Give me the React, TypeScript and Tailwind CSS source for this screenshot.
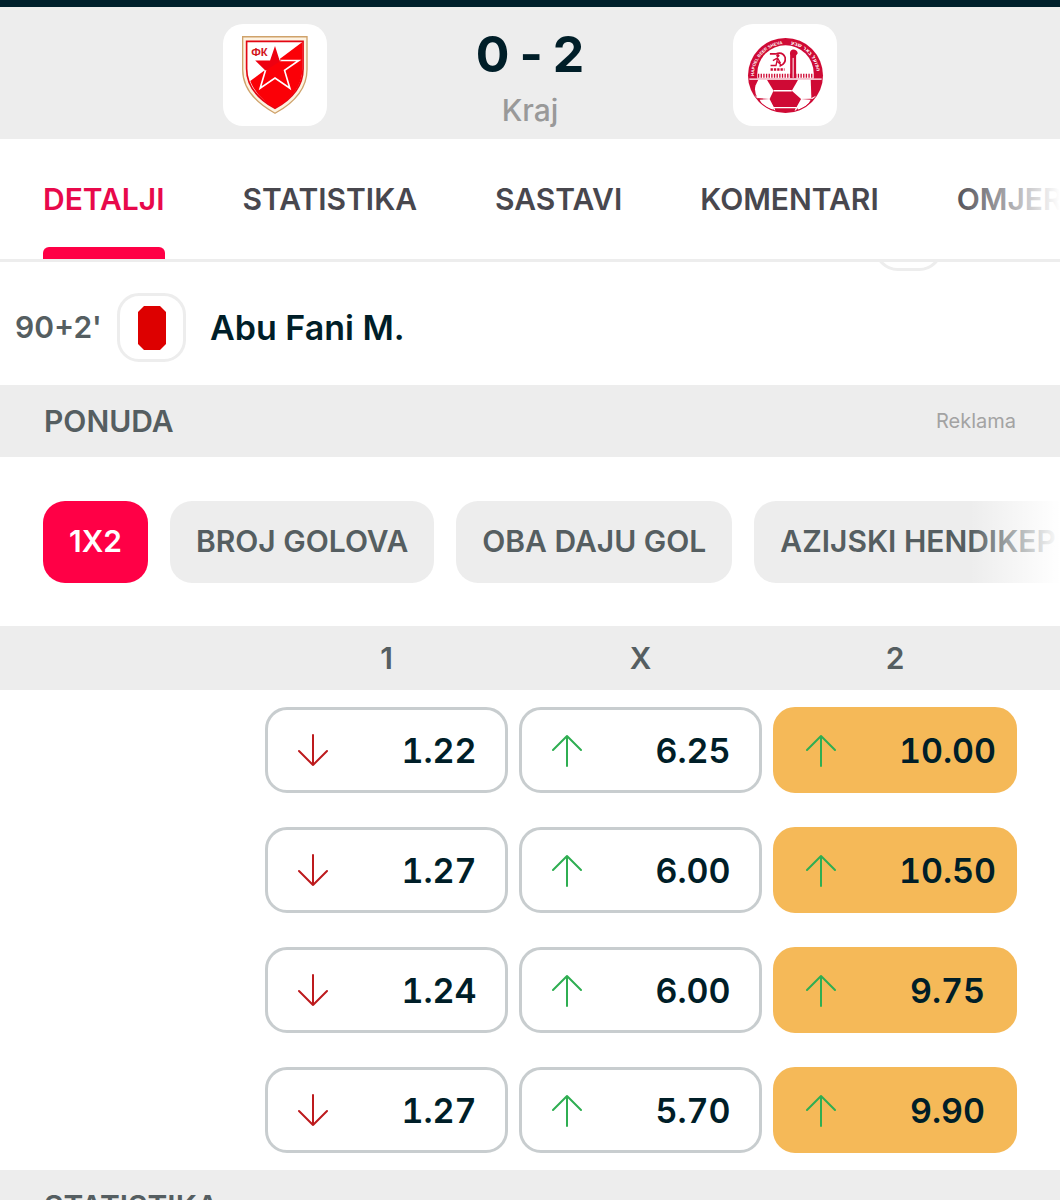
import { clsx } from 'clsx';

type Trend = 'up' | 'down';
type Odd = { value: string; trend: Trend; best?: boolean };

const tabs = ['DETALJI', 'STATISTIKA', 'SASTAVI', 'KOMENTARI', 'OMJERI'];
const markets = ['1X2', 'BROJ GOLOVA', 'OBA DAJU GOL', 'AZIJSKI HENDIKEP'];

const rows: Odd[][] = [
  [{ value: '1.22', trend: 'down' }, { value: '6.25', trend: 'up' }, { value: '10.00', trend: 'up', best: true }],
  [{ value: '1.27', trend: 'down' }, { value: '6.00', trend: 'up' }, { value: '10.50', trend: 'up', best: true }],
  [{ value: '1.24', trend: 'down' }, { value: '6.00', trend: 'up' }, { value: '9.75', trend: 'up', best: true }],
  [{ value: '1.27', trend: 'down' }, { value: '5.70', trend: 'up' }, { value: '9.90', trend: 'up', best: true }],
];

function ZvezdaCrest() {
  return (
    <svg viewBox="96 104 200 236" className="h-[78px] w-[66px]" role="img" aria-label="Crvena zvezda">
      <path d="M98 106H293V205C293 262 252 307 196 338C140 307 98 262 98 205Z" fill="#fdf3e2" stroke="#cfa26a" strokeWidth="4" />
      <path d="M110 120H281V203C281 255 245 296 196 323C147 296 110 255 110 203Z" fill="#fff" stroke="#e30613" strokeWidth="5" />
      <path d="M279 122V203C279 255 245 296 196 322C160 302 134 274 121 240Z" fill="#fb0007" />
      <path d="M196 138L210 178H268L225 208L241 262L196 231L151 262L167 208L138 180L182 178Z" fill="#fb0007" stroke="#fff" strokeWidth="5" />
      <path d="M196 134L210 178H216L167 208L136 178H181Z" fill="#ee0010" />
      <text x="149" y="164" textAnchor="middle" fontSize="34" className="fill-[#d3151b] font-['Liberation_Sans'] font-bold">ФК</text>
    </svg>
  );
}

function HapoelCrest() {
  return (
    <svg viewBox="80 77 232 232" className="h-[77px] w-[77px]" role="img" aria-label="Hapoel Beer Sheva">
      <defs>
        <clipPath id="ball"><circle cx="196" cy="193" r="110" /></clipPath>
        <path id="ring-left" d="M101 196A95 95 0 0 1 196 98" />
        <path id="ring-right" d="M206 98A95 95 0 0 1 291 196" />
      </defs>
      <circle cx="196" cy="193" r="113" fill="#cf0a35" />
      <path d="M111 187A85 85 0 0 1 281 187V202H111Z" fill="#fff" />
      <text fontSize="13" className="fill-white font-['Liberation_Sans'] font-bold">
        <textPath href="#ring-left" startOffset="2">HAPOEL BEER SHEVA</textPath>
      </text>
      <text fontSize="16" className="fill-white font-['DejaVu_Sans'] font-bold">
        <textPath href="#ring-right" startOffset="6">הפועל באר שבע</textPath>
      </text>
      <path d="M113 194H279" stroke="#cf0a35" strokeWidth="12" strokeDasharray="4 4" />
      <path d="M210 201V132Q207 119 218 115Q230 114 233 126L228 133V201Z" fill="#cf0a35" />
      <path d="M219 140V200" stroke="#fff" strokeWidth="3" />
      <path d="M149 128H166Q188 120 195 139Q198 158 178 165M151 163H167" fill="none" stroke="#cf0a35" strokeWidth="5" />
      <circle cx="173" cy="133" r="5" fill="#cf0a35" />
      <path d="M158 148L172 140L181 156M172 141L167 165M172 151L184 163" fill="none" stroke="#cf0a35" strokeWidth="4" />
      <path d="M151 175H193" stroke="#cf0a35" strokeWidth="8" strokeDasharray="7 3" />
      <g clipPath="url(#ball)">
        <path d="M82 204H310" stroke="#fff" strokeWidth="4" />
        <path d="M106 222L114 206H140L160 239L148 264L112 261Q100 240 106 222Z" fill="#fff" />
        <path d="M234 206H272L274 263L243 264L215 239Z" fill="#fff" />
        <path d="M160 239H215M148 264L160 289L166 308M243 264L230 289L222 308M274 263L296 252M112 261L96 250" fill="none" stroke="#fff" strokeWidth="4" />
        <path d="M118 266Q126 286 158 296L162 289L148 264Z" fill="#fff" />
        <path d="M272 266Q264 286 234 296L230 289L243 264Z" fill="#fff" />
        <path d="M148 264H243L228 290H162Z" fill="#cf0a35" />
        <path d="M160 290H230" stroke="#fff" strokeWidth="4" />
      </g>
    </svg>
  );
}

function TrendArrow({ trend }: { trend: Trend }) {
  return (
    <svg viewBox="0 0 30 34" className="h-[34px] w-[30px] shrink-0" fill="none" strokeWidth="2" strokeLinecap="round" strokeLinejoin="round" aria-hidden="true">
      {trend === 'up'
        ? <path d="M15 33V3M1 17L15 3L29 17" stroke="#2fae52" />
        : <path d="M15 2V32M1 18L15 32L29 18" stroke="#bd1a1d" />}
    </svg>
  );
}

function SectionBar({ title, note }: { title: string; note?: string }) {
  return (
    <div className="flex h-[72px] items-center justify-between bg-[#ededed] px-11">
      <h2 className="text-[30px] font-semibold text-[#555e61]">{title}</h2>
      {note && <span className="text-[20px] text-[#a3a3a3]">{note}</span>}
    </div>
  );
}

export default function App() {
  return (
    <div className="h-screen overflow-hidden bg-white font-['Inter',sans-serif] text-[#001e28]">
      <header className="border-t-[7px] border-[#00202b] bg-[#ededed]">
        <div className="flex h-[132px] justify-center pt-[17px]">
          <div className="flex h-[102px] w-[104px] items-center justify-center rounded-[20px] bg-white"><ZvezdaCrest /></div>
          <div className="w-[406px] text-center">
            <div className="flex h-[60px] items-center justify-center gap-[10px] text-[50px] font-bold">
              <span>0</span>
              <span>-</span>
              <span>2</span>
            </div>
            <p className="text-[30px] leading-[52px] font-medium text-[#999]">Kraj</p>
          </div>
          <div className="flex h-[102px] w-[104px] items-center justify-center rounded-[20px] bg-white"><HapoelCrest /></div>
        </div>
      </header>

      <nav className="relative flex h-[123px] gap-[78px] overflow-hidden border-b-[3px] border-[#ededed] pl-[43px]">
        {tabs.map((tab, i) => (
          <a key={tab} href="#" className={clsx('flex shrink-0 flex-col justify-between pt-[37px] text-[30px] leading-[46px] font-semibold', i === 0 ? 'text-[#e8094b]' : 'text-[#48474e]')}>
            {tab}
            {i === 0 && <span className="h-3 rounded-t-md bg-[#ff0046]" />}
          </a>
        ))}
        <div className="pointer-events-none absolute inset-y-0 right-0 w-[110px] bg-linear-to-r from-transparent to-white" />
      </nav>

      <section className="h-[123px]">
        {/* tail of the previous event, scrolled under the tabs */}
        <div className="flex h-[9px] items-end justify-end overflow-hidden pr-[117px]">
          <div className="size-[69px] shrink-0 rounded-[24px] border-[3px] border-[#ededed]" />
        </div>
        <div className="flex items-center pt-[22px] pl-[15px]">
          <span className="w-[102px] text-[30px] font-semibold text-[#555e61]">90+2'</span>
          <span className="flex size-[69px] items-center justify-center rounded-[22px] border-[3px] border-[#ededed]">
            <svg viewBox="0 0 28 44" className="h-11 w-7" role="img" aria-label="Crveni karton">
              <path d="M6 0H22L28 6V38L22 44H6L0 38V6Z" fill="#d00" />
            </svg>
          </span>
          <span className="pl-6 text-[34px] font-semibold">Abu Fani M.</span>
        </div>
      </section>

      <SectionBar title="PONUDA" note="Reklama" />

      <div className="relative flex h-[169px] items-center gap-[22px] overflow-hidden pl-[43px]">
        {markets.map((market, i) => (
          <button key={market} className={clsx('h-[82px] shrink-0 rounded-[22px] px-[26px] text-[30px] font-semibold', i === 0 ? 'bg-[#ff0046] text-white' : 'bg-[#ededed] text-[#555e61]')}>
            {market}
          </button>
        ))}
        <div className="pointer-events-none absolute inset-y-0 right-0 w-[90px] bg-linear-to-r from-transparent to-white" />
      </div>

      <table className="w-full table-fixed">
        <thead>
          <tr className="h-16 bg-[#ededed] text-[30px] text-[#555e61]">
            <th className="w-1/4" />
            <th className="pr-[11px] font-semibold">1</th>
            <th className="pr-[11px] font-semibold">X</th>
            <th className="w-[287px] pr-[43px] font-semibold">2</th>
          </tr>
        </thead>
        <tbody>
          {rows.map((row, r) => (
            <tr key={r} className="h-[120px]">
              <td />
              {row.map((odd, c) => (
                <td key={c} className={c === 2 ? 'pr-[43px]' : 'pr-[11px]'}>
                  <button className={clsx('flex h-[86px] w-full items-center gap-[45px] rounded-[22px] border-[3px] pl-[30px] text-[34px] font-semibold tabular-nums', odd.best ? 'border-[#f5b958] bg-[#f5b958]' : 'border-[#c8cdcf]')}>
                    <TrendArrow trend={odd.trend} />
                    <span className="flex-1 text-center">{odd.value}</span>
                  </button>
                </td>
              ))}
            </tr>
          ))}
        </tbody>
      </table>

      <SectionBar title="STATISTIKA" />
    </div>
  );
}
